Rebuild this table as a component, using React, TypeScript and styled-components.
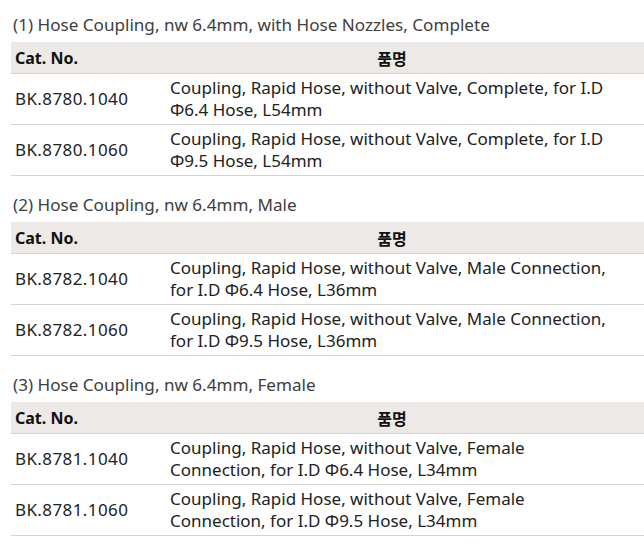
import styled, { createGlobalStyle } from "styled-components";

const GlobalStyle = createGlobalStyle`
    html, body {
        margin: 0;
        padding: 0;
        background: #ffffff;
    }
    body {
        font-family: "Noto Sans", "Noto Sans CJK KR", sans-serif;
        color: #222;
    }
`;

type rowType = {
    catNo: string;
    lines: string[];
};

type sectionType = {
    title: string;
    rows: rowType[];
};

const sections: sectionType[] = [
    {
        title: "(1) Hose Coupling, nw 6.4mm, with Hose Nozzles, Complete",
        rows: [
            {
                catNo: "BK.8780.1040",
                lines: [
                    "Coupling, Rapid Hose, without Valve, Complete, for I.D",
                    "Φ6.4 Hose, L54mm",
                ],
            },
            {
                catNo: "BK.8780.1060",
                lines: [
                    "Coupling, Rapid Hose, without Valve, Complete, for I.D",
                    "Φ9.5 Hose, L54mm",
                ],
            },
        ],
    },
    {
        title: "(2) Hose Coupling, nw 6.4mm, Male",
        rows: [
            {
                catNo: "BK.8782.1040",
                lines: [
                    "Coupling, Rapid Hose, without Valve, Male Connection,",
                    "for I.D Φ6.4 Hose, L36mm",
                ],
            },
            {
                catNo: "BK.8782.1060",
                lines: [
                    "Coupling, Rapid Hose, without Valve, Male Connection,",
                    "for I.D Φ9.5 Hose, L36mm",
                ],
            },
        ],
    },
    {
        title: "(3) Hose Coupling, nw 6.4mm, Female",
        rows: [
            {
                catNo: "BK.8781.1040",
                lines: [
                    "Coupling, Rapid Hose, without Valve, Female",
                    "Connection, for I.D Φ6.4 Hose, L34mm",
                ],
            },
            {
                catNo: "BK.8781.1060",
                lines: [
                    "Coupling, Rapid Hose, without Valve, Female",
                    "Connection, for I.D Φ9.5 Hose, L34mm",
                ],
            },
        ],
    },
];

const Page = styled.div`
    padding: 10px 0 0 11px;
    width: 633px;
    overflow: hidden;
`;

const Section = styled.section`
    margin-bottom: 14px;
`;

const Title = styled.h3`
    margin: 0 0 3px 2px;
    padding-top: 1px;
    font-size: 17.1px;
    font-weight: 400;
    line-height: 28px;
    color: #404040;
    white-space: nowrap;
`;

const Table = styled.div`
    display: grid;
    grid-template-columns: 155px 1fr;
`;

const HeadCell = styled.div<{ $center?: boolean }>`
    height: 31px;
    display: flex;
    align-items: center;
    justify-content: ${(p) => (p.$center ? "center" : "flex-start")};
    padding: 0 ${(p) => (p.$center ? "30px" : "4px")} 0 4px;
    background: #ece9e6;
    border-bottom: 1px solid #d4d4d4;
    font-size: 16px;
    font-weight: 700;
    color: #111;
`;

const Cell = styled.div<{ $code?: boolean }>`
    height: 50px;
    display: flex;
    flex-direction: column;
    justify-content: center;
    padding: 0 4px;
    border-bottom: 1px solid #d4d4d4;
    font-size: 17px;
    line-height: 22px;
    letter-spacing: ${(p) => (p.$code ? "0.4px" : "0")};
    color: #222;
    white-space: nowrap;
`;

const App = () => {
    return (
        <>
            <GlobalStyle />
            <Page>
                {sections.map((section) => (
                    <Section key={section.title}>
                        <Title>{section.title}</Title>
                        <Table>
                            <HeadCell>Cat. No.</HeadCell>
                            <HeadCell $center>품명</HeadCell>
                            {section.rows.map((row) => (
                                <>
                                    <Cell key={row.catNo} $code>
                                        {row.catNo}
                                    </Cell>
                                    <Cell key={row.catNo + "-name"}>
                                        {row.lines.map((line) => (
                                            <span key={line}>{line}</span>
                                        ))}
                                    </Cell>
                                </>
                            ))}
                        </Table>
                    </Section>
                ))}
            </Page>
        </>
    );
};

export default App;
